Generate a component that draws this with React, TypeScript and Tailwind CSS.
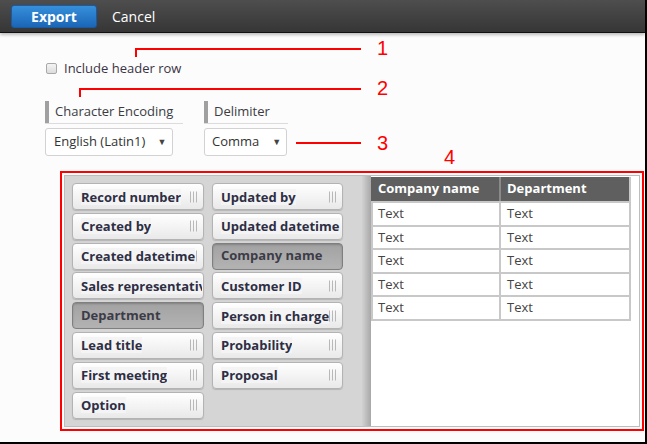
import React from "react";

const F = { fontFamily: '"Open Sans", "Noto Sans", sans-serif' };

function Grip() {
  return (
    <div className="absolute right-[6px] top-1/2 -translate-y-1/2 flex gap-[2px] h-[11px]">
      <div className="w-px h-full bg-[#b8b8b8]" />
      <div className="w-px h-full bg-[#b8b8b8]" />
      <div className="w-px h-full bg-[#b8b8b8]" />
    </div>
  );
}

function FieldBtn({ label, selected, w }: { label: string; selected?: boolean; w: string }) {
  if (selected) {
    return (
      <div
        className={`${w} h-[27px] rounded-[4px] border border-[#7f7f7f] bg-gradient-to-b from-[#a2a2a2] to-[#b3b3b3] flex items-center pl-[8px] text-[13px] font-bold text-[#3c3c48] shadow-[inset_0_1px_2px_rgba(0,0,0,0.2)]`}
      >
        {label}
      </div>
    );
  }
  return (
    <div
      className={`${w} h-[27px] relative rounded-[4px] border border-[#b3b3b3] bg-gradient-to-b from-[#ffffff] to-[#e9e9e9] shadow-[0_1px_1px_rgba(0,0,0,0.15)] flex items-center pl-[8px] pr-[1px] overflow-hidden`}
    >
      <Grip />
      <span className="relative z-10 whitespace-nowrap overflow-hidden text-[13px] font-bold text-[#2e2e44] bg-[#f4f4f4] leading-[16px]">
        {label}
      </span>
    </div>
  );
}

export default function App() {
  const col1 = [
    { l: "Record number" },
    { l: "Created by" },
    { l: "Created datetime" },
    { l: "Sales representative" },
    { l: "Department", s: true },
    { l: "Lead title" },
    { l: "First meeting" },
    { l: "Option" },
  ];
  const col2 = [
    { l: "Updated by" },
    { l: "Updated datetime" },
    { l: "Company name", s: true },
    { l: "Customer ID" },
    { l: "Person in charge" },
    { l: "Probability" },
    { l: "Proposal" },
  ];
  const rows = [0, 1, 2, 3, 4];
  return (
    <div
      style={F}
      className="relative w-[647px] h-[444px] bg-[#fcfcfc] border-r-2 border-b-2 border-black overflow-hidden box-border"
    >
      {/* top bar */}
      <div className="h-[33px] bg-gradient-to-b from-[#4e4e4e] to-[#363636] border-b border-[#111] flex items-center pl-[11px] shadow-[0_2px_3px_rgba(0,0,0,0.25)]">
        <div className="w-[86px] h-[23px] rounded-[3px] border border-[#1b5aa0] bg-gradient-to-b from-[#3690dc] to-[#1b66b6] flex items-center justify-center text-white font-bold text-[14px]">
          Export
        </div>
        <div className="ml-[15px] text-white text-[14px]">Cancel</div>
      </div>

      {/* checkbox row */}
      <div className="mt-[27px] ml-[46px] h-[17px] flex items-center gap-[7px]">
        <div className="w-[11px] h-[11px] rounded-[2px] border border-[#a9a9a9] bg-gradient-to-b from-[#f4f4f4] to-[#dcdcdc]" />
        <span className="text-[13px] text-[#3b3344]">Include header row</span>
      </div>

      {/* encoding / delimiter */}
      <div className="mt-[24px] ml-[45px] flex">
        <div className="w-[159px] flex flex-col">
          <div className="w-[138px] border-b border-[#dcdcdc]">
            <div className="h-[22px] border-l-4 border-[#a0a0a0] pl-[6px] flex items-center text-[13px] text-[#3b3b44]">
              Character Encoding
            </div>
          </div>
          <div className="mt-[4px] w-[128px] h-[28px] border border-[#d2d2d2] rounded-[3px] bg-white flex items-center pl-[8px] text-[13px] text-[#333]">
            English (Latin1)
            <span className="ml-[12px] text-[9px] text-[#444]">▼</span>
          </div>
        </div>
        <div className="flex flex-col">
          <div className="w-[84px] border-b border-[#dcdcdc]">
            <div className="h-[22px] border-l-4 border-[#a0a0a0] pl-[6px] flex items-center text-[13px] text-[#3b3b44]">
              Delimiter
            </div>
          </div>
          <div className="mt-[4px] w-[83px] h-[28px] border border-[#d2d2d2] rounded-[3px] bg-white flex items-center pl-[7px] text-[13px] text-[#333]">
            Comma
            <span className="ml-[13px] text-[9px] text-[#444]">▼</span>
          </div>
        </div>
      </div>

      {/* red framed area */}
      <div className="mt-[15px] ml-[60px] w-[584px] h-[260px] border-2 border-[#ff0000] p-[2px]">
        <div className="w-full h-full border border-[#bdbdbd] flex">
          <div className="flex h-full">
            <div className="w-[297px] h-full bg-[#d5d5d5] pt-[7px] pl-[7px] flex gap-[8px]">
              <div className="flex flex-col gap-[2.8px]">
                {col1.map((b) => (
                  <FieldBtn key={b.l} label={b.l} selected={b.s} w="w-[132px]" />
                ))}
              </div>
              <div className="flex flex-col gap-[2.8px]">
                {col2.map((b) => (
                  <FieldBtn key={b.l} label={b.l} selected={b.s} w="w-[131px]" />
                ))}
              </div>
            </div>
            <div className="w-[9px] h-full bg-gradient-to-r from-[#d2d2d2] to-[#a8a8a8]" />
          </div>
          <div className="flex-1 bg-white pt-[1px]">
            <div className="w-[260px] border-2 border-t-0 border-[#c8c8c8] border-l-0">
              <div className="flex h-[24px] bg-[#5f5f5f] text-white font-bold text-[13px]">
                <div className="w-[130px] border-r-2 border-[#8a8a8a] flex items-center pl-[7px]">Company name</div>
                <div className="flex-1 flex items-center pl-[6px]">Department</div>
              </div>
              {rows.map((r) => (
                <div
                  key={r}
                  className="flex h-[23.6px] border-t-2 first:border-t-0 border-[#c8c8c8] text-[13px] text-[#444] border-l-2"
                >
                  <div className="w-[128px] border-r-2 border-[#c8c8c8] flex items-center pl-[5px]">Text</div>
                  <div className="flex-1 flex items-center pl-[6px]">Text</div>
                </div>
              ))}
            </div>
          </div>
        </div>
      </div>

      {/* annotations */}
      <div className="absolute left-[135px] top-[48px] w-[226px] h-[2px] bg-[#ff0000]" />
      <div className="absolute left-[135px] top-[48px] w-[2px] h-[9px] bg-[#ff0000]" />
      <div className="absolute left-[79px] top-[88px] w-[282px] h-[2px] bg-[#ff0000]" />
      <div className="absolute left-[79px] top-[88px] w-[2px] h-[9px] bg-[#ff0000]" />
      <div className="absolute left-[296px] top-[142px] w-[65px] h-[2px] bg-[#ff0000]" />
      <div
        className="absolute left-[377px] top-[36px] text-[20px] leading-[24px] text-[#ff0000]"
        style={{ fontFamily: '"Liberation Sans", Arial, sans-serif' }}
      >
        1
      </div>
      <div
        className="absolute left-[377px] top-[76px] text-[20px] leading-[24px] text-[#ff0000]"
        style={{ fontFamily: '"Liberation Sans", Arial, sans-serif' }}
      >
        2
      </div>
      <div
        className="absolute left-[377px] top-[131px] text-[20px] leading-[24px] text-[#ff0000]"
        style={{ fontFamily: '"Liberation Sans", Arial, sans-serif' }}
      >
        3
      </div>
      <div
        className="absolute left-[444px] top-[145px] text-[20px] leading-[24px] text-[#ff0000]"
        style={{ fontFamily: '"Liberation Sans", Arial, sans-serif' }}
      >
        4
      </div>
    </div>
  );
}
